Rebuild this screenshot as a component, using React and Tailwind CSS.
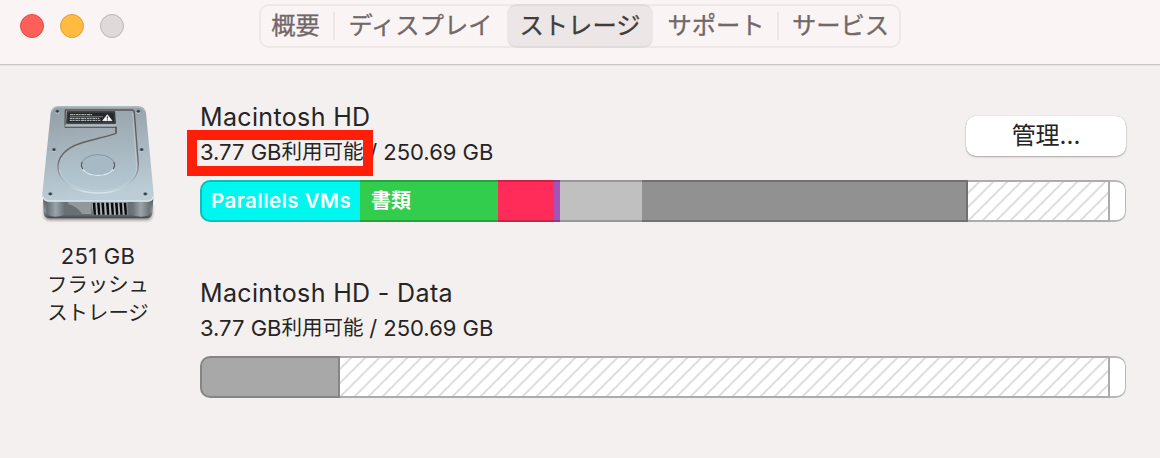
import React from 'react';

const tabs = [
  { label: '概要', className: 'w-[72px] pr-[3px] text-[#706869]' },
  { label: 'ディスプレイ', className: 'w-[172px] pr-[1px] text-[#706869]', divider: true },
  { label: 'ストレージ', className: '-my-[2px] h-[44px] w-[146px] rounded-[10px] bg-[#ece6e6] border-y-2 border-[#e1dbdb] text-[#403c3d]' },
  { label: 'サポート', className: 'w-[124px] pl-[2px] text-[#706869]' },
  { label: 'サービス', className: 'w-[120px] pl-[3px] text-[#706869]', divider: true },
];

const ticks = [188, 201, 214, 228, 242, 255, 268, 281];

const screws = [
  [82, 49],
  [325, 49],
  [72, 164],
  [335, 164],
  [61, 297],
  [346, 297],
];

const DriveIcon = () => (
  <svg viewBox="-6 0 420 405" className="h-[135px] w-[140px] shrink-0" aria-hidden="true">
    <defs>
      <linearGradient id="lid" x1="0" y1="0" x2="0.15" y2="1">
        <stop offset="0" stopColor="#929da4" />
        <stop offset="0.5" stopColor="#a7b5be" />
        <stop offset="1" stopColor="#bccdd7" />
      </linearGradient>
      <linearGradient id="arm" x1="0" y1="0" x2="0" y2="1">
        <stop offset="0" stopColor="#9aa6ad" />
        <stop offset="1" stopColor="#b6cad5" />
      </linearGradient>
      <linearGradient id="rim" x1="0" y1="0" x2="0" y2="1">
        <stop offset="0" stopColor="#5b5253" />
        <stop offset="0.6" stopColor="#6c6868" />
        <stop offset="1" stopColor="#d5e5ee" />
      </linearGradient>
      <linearGradient id="base" x1="0" y1="0" x2="0" y2="1">
        <stop offset="0" stopColor="#565e61" />
        <stop offset="0.65" stopColor="#899194" />
        <stop offset="1" stopColor="#3d4547" />
      </linearGradient>
      <linearGradient id="post" x1="0" y1="0" x2="1" y2="0">
        <stop offset="0" stopColor="#626b6f" />
        <stop offset="0.5" stopColor="#9ba4a8" />
        <stop offset="1" stopColor="#656e72" />
      </linearGradient>
      <filter id="soft" x="-10%" y="-10%" width="120%" height="130%">
        <feGaussianBlur stdDeviation="4" />
      </filter>
    </defs>
    <path d="M42 330H367V360Q365 376 348 376H60Q43 376 42 360Z" fill="#000" opacity="0.4" filter="url(#soft)" />
    <path d="M39 310H370L367 353Q365 370 347 370H61Q43 370 41 353Z" fill="url(#base)" />
    <path d="M105 320H303V359H105Z" fill="#687074" />
    <path d="M115 320H184V357H157Q141 334 115 328Z" fill="#91999d" />
    <path d="M49 318H105V355Q102 365 77 365Q49 365 49 352Z" fill="url(#post)" />
    <path d="M304 318H361V352Q361 365 333 365Q306 365 304 355Z" fill="url(#post)" />
    <path d="M184 322H292V359H190Z" fill="#acb4b7" />
    {ticks.map((x) => (
      <path key={x} d={`M${x} 323h8l2 36h-7z`} fill="#080a0b" />
    ))}
    <path d="M84 34H326Q344 34 348 54L371 297Q372 320 352 320H57Q36 320 37 297L62 54Q66 34 84 34Z" fill="url(#lid)" />
    <path d="M39 305Q42 318 57 318H352Q367 318 370 305" fill="none" stroke="#d6e4eb" strokeWidth="4" />
    <path d="M66 48Q71 36 84 36H326Q339 36 344 48" fill="none" stroke="#b6bec2" strokeWidth="3" />
    <path
      d="M106 45H307Q312 45 313 54L325 207C328 260 271 294 204 294C135 294 80 259 84 211C88 170 130 149 174 138C208 129 237 123 258 115V96H105Z"
      fill="url(#arm)"
      stroke="url(#rim)"
      strokeWidth="4"
      strokeLinejoin="round"
    />
    <path d="M89 221C92 258 140 288 204 288C266 288 320 260 320 214L308 53" fill="none" stroke="#c9d9e2" strokeWidth="2" opacity="0.8" />
    <path d="M105 96H258V113" fill="none" stroke="#544f51" strokeWidth="3" />
    <path d="M104 93H257" stroke="#c3d0d8" strokeWidth="3" />
    <ellipse cx="204" cy="210" rx="50" ry="31" fill="#a6b9c4" stroke="#87969f" strokeWidth="3" />
    <path d="M156 201Q151 213 158 222M252 201Q257 213 250 222" fill="none" stroke="#514c4e" strokeWidth="3" />
    <path d="M158 223Q173 241 204 241Q235 241 250 223" fill="none" stroke="#dcecf5" strokeWidth="4" />
    <path d="M112 50H254L256 85H110Z" fill="#252728" stroke="#111" strokeWidth="2" />
    <path d="M114 52H252L254 83H112Z" fill="none" stroke="#777c7f" strokeWidth="1" />
    <path d="M120 59H188M119 70H208M119 76H211" stroke="#c8ccce" strokeWidth="3" strokeDasharray="9 1 5 2" />
    <path d="M119 65H219" stroke="#c8ccce" strokeWidth="1.5" />
    <path d="M232 59L246 77H218Z" fill="#fff" stroke="#fff" strokeWidth="2" strokeLinejoin="round" />
    <path d="M232 64V71M232 73V76" stroke="#222" strokeWidth="3" />
    {screws.map(([x, y]) => (
      <g key={`${x}-${y}`}>
        <ellipse cx={x} cy={y} rx="7" ry="6" fill="#8496a0" />
        <ellipse cx={x} cy={y} rx="4.5" ry="4" fill="#35434b" />
        <path d={`M${x - 6} ${y + 4}q6 5 12 0`} fill="none" stroke="#cedde5" strokeWidth="2" />
      </g>
    ))}
  </svg>
);

const Hatch = ({ id, className }) => (
  <div className={`h-full border-y-2 border-r-2 border-[#acacac] bg-white ${className}`}>
    <svg className="block h-full w-full" aria-hidden="true">
      <defs>
        <pattern id={id} width="14" height="14" patternUnits="userSpaceOnUse" x="-3" y="0">
          <path d="M-2 16L16 -2M-2 2L2 -2M12 16L16 12" stroke="#dedede" strokeWidth="2" />
        </pattern>
      </defs>
      <rect width="100%" height="100%" fill={`url(#${id})`} />
    </svg>
  </div>
);

const FreeEnd = () => (
  <div className="h-full w-4 rounded-r-[10px] border-y-2 border-r border-[#b9b8b8] bg-white" />
);

const Capacity = () => (
  <p className="flex h-7 items-center whitespace-pre text-[22px] leading-7">
    <span>3.77 GB</span>
    <span className="text-[20.5px]">利用可能</span>
    <span className="-ml-[0.5px]"> / 250.69 GB</span>
  </p>
);

const App = () => {
  return (
    <div className="flex h-[458px] w-[1160px] flex-col overflow-hidden bg-[#f4f0ef] font-['Inter','Noto_Sans_CJK_JP',sans-serif] text-[#262424]">
      <header className="flex h-[66px] shrink-0 border-b border-[#e9e5e5] bg-[#faf4f4]">
        <div className="flex h-[65px] w-full border-b border-[#cac5c5]">
          <div className="flex w-[259px] shrink-0 gap-4 pl-5 pt-[14px]">
            <span className="h-6 w-6 rounded-full border border-[#e24b45] bg-[#ff5f59]" />
            <span className="h-6 w-6 rounded-full border border-[#dfa037] bg-[#ffbb40]" />
            <span className="h-6 w-6 rounded-full border border-[#bcb7b7] bg-[#dfd9d9]" />
          </div>
          <nav className="mt-1 flex h-11 w-[642px] rounded-[10px] border-2 border-[#eee8e8]">
            {tabs.map((tab) => (
              <React.Fragment key={tab.label}>
                {tab.divider && <span className="mt-[6px] h-7 w-[2px] shrink-0 bg-[#ebe5e5]" />}
                <button className={`flex shrink-0 items-center justify-center whitespace-nowrap pb-[2px] text-[24.3px] leading-9 [-webkit-text-stroke:0.3px] ${tab.className}`}>
                  {tab.label}
                </button>
              </React.Fragment>
            ))}
          </nav>
        </div>
      </header>

      <main className="flex flex-1">
        <aside className="flex w-[200px] flex-col items-center pr-1 pt-[29px]">
          <DriveIcon />
          <div className="mt-[12px] text-center text-[20.4px] leading-7">
            <p className="text-[22px] tracking-[0.25px]">251 GB</p>
            <p className="pt-[1px]">フラッシュ</p>
            <p>ストレージ</p>
          </div>
        </aside>

        <div className="w-[926px] pt-[34px]">
          <section className="h-[176px]">
            <div className="flex h-20 justify-between">
              <div className="pt-[1px]">
                <h2 className="h-8 text-[25px] leading-8 tracking-[0.35px]">Macintosh HD</h2>
                <div className="relative mt-[5px]">
                  <Capacity />
                  <div className="absolute -left-[13px] -top-[8px] h-[46px] w-[186px] border-[10px] border-[#ff1f08]" />
                </div>
              </div>
              <button className="mt-[16px] h-10 w-[160px] rounded-[10px] bg-white pb-[1px] text-[24px] shadow-[0_1px_2px_#0000004d,0_0_1px_#00000033]">
                管理...
              </button>
            </div>
            <div className="flex h-[42px] text-[20px] font-semibold text-white">
              <div className="flex w-[160px] items-center whitespace-nowrap rounded-l-[10px] border-y-2 border-l-2 border-[#0dbeb8] bg-[#00f7ef] pl-[9px] text-[20.5px] tracking-[0.45px]">Parallels VMs</div>
              <div className="flex w-[138px] items-center border-y-2 border-[#299f3d] bg-[#33cd4e] pl-[11px] font-bold">書類</div>
              <div className="w-[56px] border-y-2 border-[#c92445] bg-[#ff2b58]" />
              <div className="w-[6px] border-y-2 border-[#824091] bg-[#a553b9]" />
              <div className="w-[82px] border-y-2 border-[#979797] bg-[#c0c0c0]" />
              <div className="w-[326px] border-y-2 border-r-2 border-[#717171] bg-[#919191]" />
              <Hatch id="purgeable" className="w-[142px]" />
              <FreeEnd />
            </div>
          </section>

          <section>
            <div className="h-20 pt-[1px]">
              <h2 className="h-8 text-[25px] leading-8 tracking-[0.35px]">Macintosh HD - Data</h2>
              <div className="mt-[5px]">
                <Capacity />
              </div>
            </div>
            <div className="flex h-[42px]">
              <div className="w-[140px] rounded-l-[10px] border-2 border-[#858585] bg-[#a8a8a8]" />
              <Hatch id="data-purgeable" className="w-[770px]" />
              <FreeEnd />
            </div>
          </section>
        </div>
      </main>
    </div>
  );
};

export default App;
